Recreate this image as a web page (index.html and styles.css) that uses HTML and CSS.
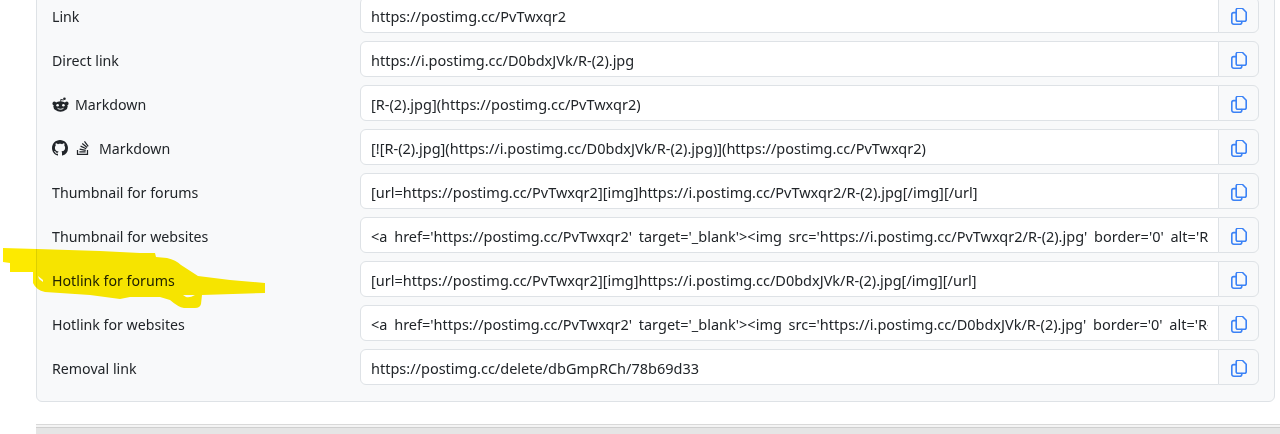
FILE: index.html

```html
<!DOCTYPE html>
<html lang="en">
<head>
  <meta charset="UTF-8">
  <meta name="viewport" content="width=device-width, initial-scale=1.0">
  <title>Image links</title>
  <link rel="stylesheet" href="styles.css">
</head>
<body>

  <svg width="0" height="0" class="defs">
    <symbol id="copy-icon" viewBox="0 0 16 17">
      <path d="M5.2 1.8a1.5 1.5 0 0 1 1.5-1.5h4.6l3.9 3.9v7.6a1.5 1.5 0 0 1-1.5 1.5H6.7a1.5 1.5 0 0 1-1.5-1.5z" fill="none" stroke="currentColor" stroke-width="1.6" stroke-linejoin="round"/>
      <path d="M5 4.6H2.7A1.9 1.9 0 0 0 .8 6.5v7.7a2 2 0 0 0 2 2h6a2 2 0 0 0 2-2V13.6" fill="none" stroke="currentColor" stroke-width="1.6" stroke-linecap="round"/>
    </symbol>
  </svg>

  <div class="links-card">
    <div class="link-row">
      <label class="link-label">Link</label>
      <div class="input-group">
        <input type="text" readonly value="https://postimg.cc/PvTwxqr2">
        <button type="button"><svg class="copy"><use href="#copy-icon"/></svg></button>
      </div>
    </div>

    <div class="link-row">
      <label class="link-label">Direct link</label>
      <div class="input-group">
        <input type="text" readonly value="https://i.postimg.cc/D0bdxJVk/R-(2).jpg">
        <button type="button"><svg class="copy"><use href="#copy-icon"/></svg></button>
      </div>
    </div>

    <div class="link-row">
      <label class="link-label">
        <svg class="brand reddit" viewBox="0 0 18 16" width="17" height="15">
          <circle cx="13.2" cy="1.9" r="1.4"/>
          <path d="M9.3 5V2.6l3 .6" fill="none" stroke="#212529" stroke-width="1"/>
          <circle cx="2.4" cy="6.8" r="2"/>
          <circle cx="15.6" cy="6.8" r="2"/>
          <ellipse cx="9" cy="10" rx="7.6" ry="5.6"/>
          <circle cx="5.9" cy="8.8" r="1.4" fill="#f8f9fa"/>
          <circle cx="12.1" cy="8.8" r="1.4" fill="#f8f9fa"/>
          <path d="M5.8 12c1.8 1.4 4.6 1.4 6.4 0" fill="none" stroke="#f8f9fa" stroke-width="1"/>
        </svg>
        Markdown
      </label>
      <div class="input-group">
        <input type="text" readonly value="[R-(2).jpg](https://postimg.cc/PvTwxqr2)">
        <button type="button"><svg class="copy"><use href="#copy-icon"/></svg></button>
      </div>
    </div>

    <div class="link-row">
      <label class="link-label">
        <svg class="brand github" viewBox="0 0 16 16" width="16" height="16">
          <path d="M8 0C3.58 0 0 3.58 0 8c0 3.54 2.29 6.53 5.47 7.59.4.07.55-.17.55-.38 0-.19-.01-.82-.01-1.49-2.01.37-2.53-.49-2.69-.94-.09-.23-.48-.94-.82-1.13-.28-.15-.68-.52-.01-.53.63-.01 1.08.58 1.23.82.72 1.21 1.87.87 2.33.66.07-.52.28-.87.51-1.07-1.78-.2-3.64-.89-3.64-3.95 0-.87.31-1.59.82-2.15-.08-.2-.36-1.02.08-2.12 0 0 .67-.21 2.2.82.64-.18 1.32-.27 2-.27.68 0 1.36.09 2 .27 1.53-1.04 2.2-.82 2.2-.82.44 1.1.16 1.92.08 2.12.51.56.82 1.27.82 2.15 0 3.07-1.87 3.75-3.65 3.95.29.25.54.73.54 1.48 0 1.07-.01 1.93-.01 2.2 0 .21.15.46.55.38A8.012 8.012 0 0 0 16 8c0-4.42-3.58-8-8-8z"/>
        </svg>
        <svg class="brand stack" viewBox="0 0 16 16" width="14" height="14">
          <path d="M12.412 14.572V10.29h1.428V16H1v-5.71h1.428v4.282h9.984z"/>
          <path d="M3.857 13.145h7.137v-1.428H3.857v1.428zM10.254 0 9.108.852l4.26 5.727 1.146-.852L10.254 0zm-3.54 3.377 5.484 4.567.913-1.097L7.627 2.28l-.914 1.097zM4.922 6.55l6.47 3.013.603-1.294-6.47-3.013-.603 1.294zm-.925 3.344 6.985 1.469.294-1.398-6.985-1.468-.294 1.397z"/>
        </svg>
        Markdown
      </label>
      <div class="input-group">
        <input type="text" readonly value="[![R-(2).jpg](https://i.postimg.cc/D0bdxJVk/R-(2).jpg)](https://postimg.cc/PvTwxqr2)">
        <button type="button"><svg class="copy"><use href="#copy-icon"/></svg></button>
      </div>
    </div>

    <div class="link-row">
      <label class="link-label">Thumbnail for forums</label>
      <div class="input-group">
        <input type="text" readonly value="[url=https://postimg.cc/PvTwxqr2][img]https://i.postimg.cc/PvTwxqr2/R-(2).jpg[/img][/url]">
        <button type="button"><svg class="copy"><use href="#copy-icon"/></svg></button>
      </div>
    </div>

    <div class="link-row">
      <label class="link-label">Thumbnail for websites</label>
      <div class="input-group">
        <input type="text" readonly value="<a href='https://postimg.cc/PvTwxqr2' target='_blank'><img src='https://i.postimg.cc/PvTwxqr2/R-(2).jpg' border='0' alt='R-(2)'/></a>">
        <button type="button"><svg class="copy"><use href="#copy-icon"/></svg></button>
      </div>
    </div>

    <div class="link-row">
      <label class="link-label">Hotlink for forums</label>
      <div class="input-group">
        <input type="text" readonly value="[url=https://postimg.cc/PvTwxqr2][img]https://i.postimg.cc/D0bdxJVk/R-(2).jpg[/img][/url]">
        <button type="button"><svg class="copy"><use href="#copy-icon"/></svg></button>
      </div>
    </div>

    <div class="link-row">
      <label class="link-label">Hotlink for websites</label>
      <div class="input-group">
        <input type="text" readonly value="<a href='https://postimg.cc/PvTwxqr2' target='_blank'><img src='https://i.postimg.cc/D0bdxJVk/R-(2).jpg' border='0' alt='R-(2)'/></a>">
        <button type="button"><svg class="copy"><use href="#copy-icon"/></svg></button>
      </div>
    </div>

    <div class="link-row">
      <label class="link-label">Removal link</label>
      <div class="input-group">
        <input type="text" readonly value="https://postimg.cc/delete/dbGmpRCh/78b69d33">
        <button type="button"><svg class="copy"><use href="#copy-icon"/></svg></button>
      </div>
    </div>
  </div>

  <div class="next-bar"></div>

  <!-- marker scribble drawn over the page, coordinates are page y - 240 -->
  <svg class="marker" width="280" height="72" viewBox="0 0 280 72">
    <path class="ink" d="M3 8 37 9 100 11 140 13 155 13 156 17 167 18Q176 20 181 25L198 36 230 40 265 43V53L202 55 201 64Q200 68 195 68H184Q178 67 170 60L160 57H130L120 59 90 55 45 52Q36 50 33 43V32H10V23L3 22z"/>
    <path class="gap" d="M38 36 43 40 43 42 39 39z"/>
    <path class="gap" d="M183 55H195Q190 58 186 57z"/>
  </svg>

</body>
</html>
```

FILE: styles.css

```css
html, body {
  height: 434px;
  overflow: hidden;
}
body {
  font-family: 'Noto Sans', 'Open Sans', sans-serif;
  font-size: 14.2px;
  color: #212529;
  background-color: #fff;
  margin: 0;
  position: relative;
}
.defs {
  position: absolute;
}
.links-card {
  margin: -21px 5px 0 36px;
  padding: 17px 15px 16px 15px;
  background-color: #f8f9fa;
  border: 1px solid #dee2e6;
  border-radius: 6px;
  display: flex;
  flex-direction: column;
  gap: 8px;
}
.link-row {
  display: flex;
  align-items: center;
  height: 36px;
}
.link-label {
  width: 308px;
  padding-top: 2px;
  display: flex;
  align-items: center;
}
.brand {
  fill: #212529;
  margin-right: 6px;
}
.github {
  margin-right: 8px;
}
.stack {
  margin-right: 9px;
}
.input-group {
  display: flex;
  width: 899px;
  height: 36px;
}
.input-group input {
  flex: 1;
  min-width: 0;
  box-sizing: border-box;
  height: 36px;
  padding: 2px 10px 0;
  font-family: inherit;
  font-size: 14.5px;
  word-spacing: 3px;
  color: #212529;
  background-color: #fff;
  border: 1px solid #dee2e6;
  border-radius: 6px 0 0 6px;
  outline: none;
}
.input-group button {
  width: 41px;
  margin-left: -1px;
  padding: 2px 0 0;
  color: #3b82f6;
  background-color: #f8f9fa;
  border: 1px solid #dee2e6;
  border-radius: 0 6px 6px 0;
  display: flex;
  align-items: center;
  justify-content: center;
}
.copy {
  width: 16px;
  height: 17px;
}
.next-bar {
  margin: 22px 0 0 36px;
  height: 20px;
  background-color: #e5e5e5;
  border-top: 1px solid #d9d9d9;
  box-shadow: inset 0 2px 0 #f4f4f4, inset 0 3px 0 #cfcfcf;
}
.marker {
  position: absolute;
  left: 0;
  top: 240px;
  mix-blend-mode: multiply;
}
.marker .ink {
  fill: #fdea00;
}
.marker .gap {
  fill: #fff;
}
```
